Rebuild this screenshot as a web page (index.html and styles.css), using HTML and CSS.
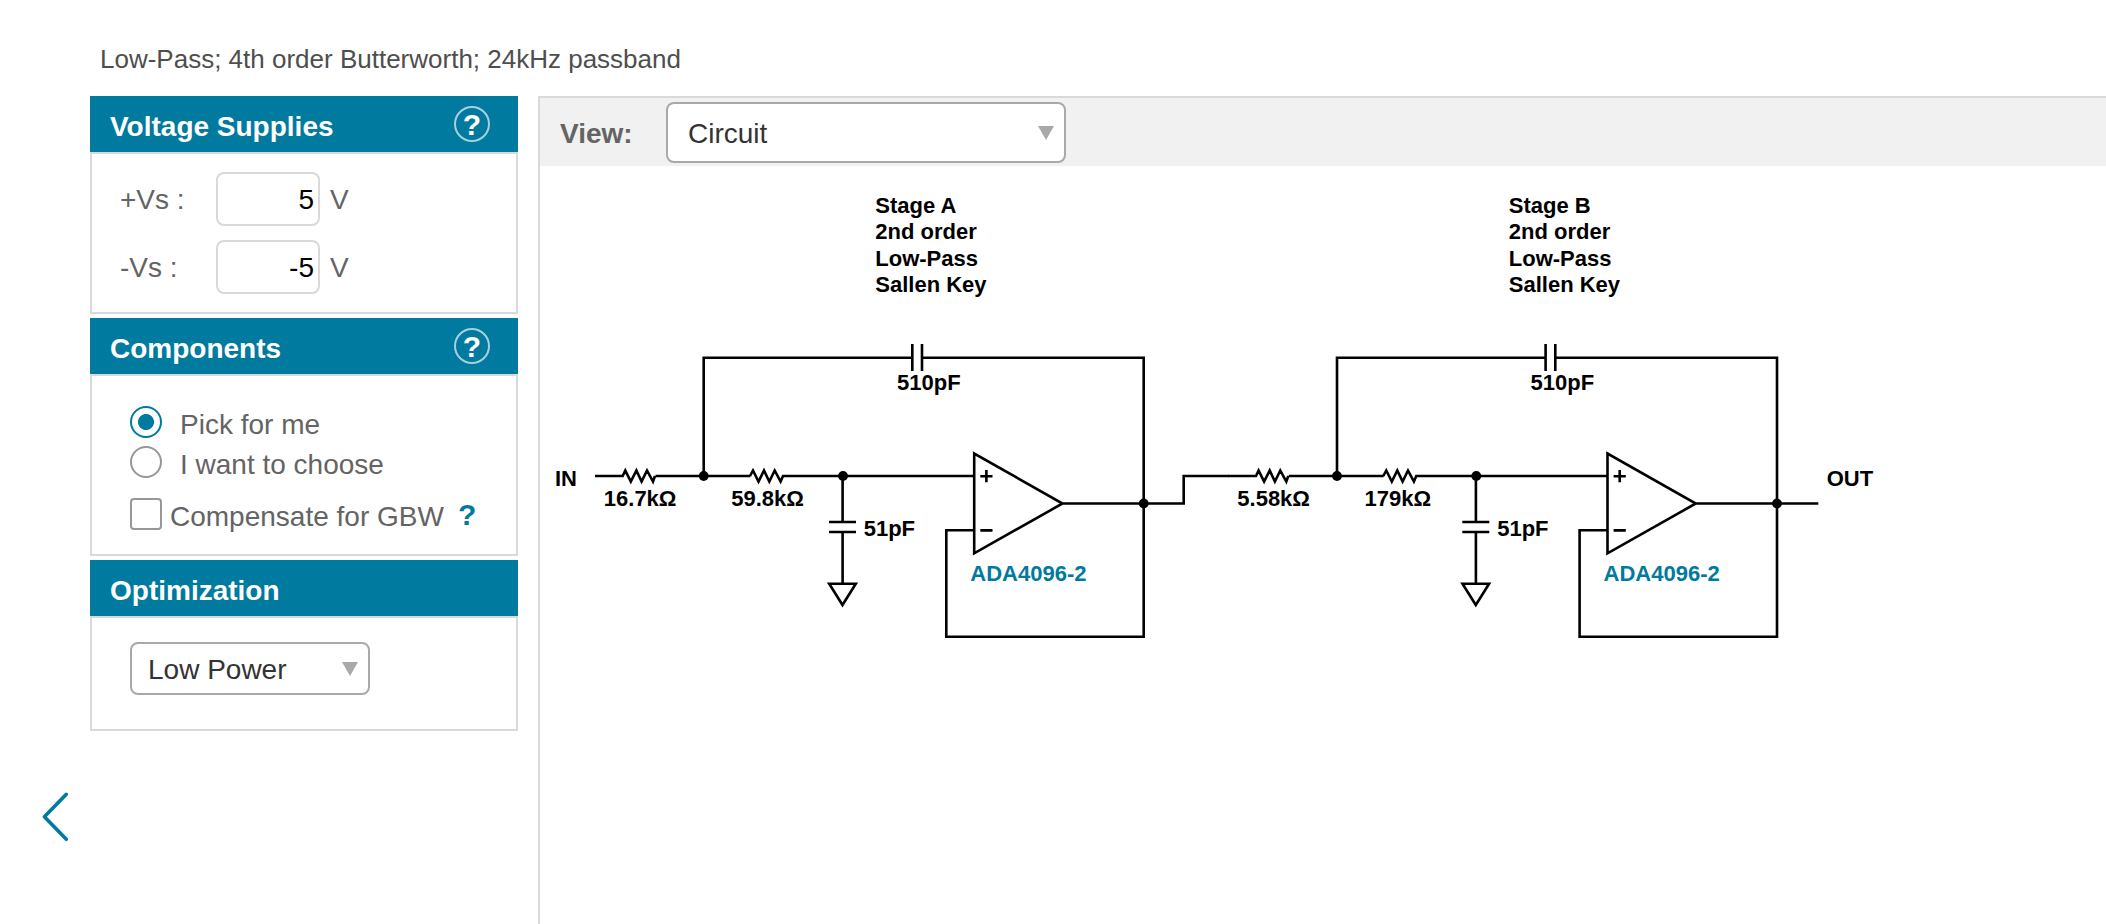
FILE: index.html
```html
<!DOCTYPE html>
<html lang="en">
<head>
<meta charset="utf-8">
<title>Filter Design</title>
<link rel="stylesheet" href="styles.css">
</head>
<body>
<header class="summary">Low-Pass; 4th order Butterworth; 24kHz passband</header>
<div class="layout">
  <nav class="gutter">
    <svg class="chevron" width="30" height="52" viewBox="0 0 30 52"><path d="M25.3 3.3 3.4 25.8 25.3 48.3"/></svg>
  </nav>
  <aside class="sidebar">
    <section class="panel">
      <h2 class="panel-head">Voltage Supplies <span class="help">?</span></h2>
      <div class="panel-body supplies">
        <div class="field"><label class="field-label">+Vs :</label><div class="field-input">5</div><span>V</span></div>
        <div class="field"><label class="field-label">-Vs :</label><div class="field-input">-5</div><span>V</span></div>
      </div>
    </section>
    <section class="panel">
      <h2 class="panel-head">Components <span class="help">?</span></h2>
      <div class="panel-body components">
        <div class="choice"><span class="radio checked"></span><span class="choice-text">Pick for me</span></div>
        <div class="choice"><span class="radio"></span><span class="choice-text">I want to choose</span></div>
        <div class="choice compensate"><span class="checkbox"></span><span class="choice-text">Compensate for GBW</span><span class="hint">?</span></div>
      </div>
    </section>
    <section class="panel">
      <h2 class="panel-head">Optimization</h2>
      <div class="panel-body optimization">
        <div class="select power"><span>Low Power</span><i class="arrow"></i></div>
      </div>
    </section>
  </aside>
  <main class="content">
    <div class="toolbar">
      <span class="view-label">View:</span>
      <div class="select view"><span>Circuit</span><i class="arrow"></i></div>
    </div>
    <svg class="circuit" width="1566" height="758" viewBox="540 166 1566 758">
      <defs>
        <g id="stage">
          <path d="M655.5 476H750.4M655 476 653 481.5 647 470.5 641.6 481.5 636.4 470.5 630.8 481.5 625.3 470.5 622.7 476H595"/>
          <path d="M750 476 753 470.5 758.5 481.5 764 470.5 769.3 481.5 774.7 470.5 780.6 481.5 783 476H974"/>
          <path d="M703.7 476V357.7H912.3M922 357.7H1143.7V636.7H946.3V530.3H974"/>
          <path d="M912.3 344V371M922 344V371"/>
          <path d="M842.6 476V522M829 522H856M829 532H856M842.6 532V583.7M829.2 583.7H855.8L842.5 605Z"/>
          <path d="M974.2 453.5V553.3L1062.5 503.5ZM1062 503.5H1144"/>
          <path d="M980.3 476.2H992.5M986.4 470V482.3M980.3 530.4H992.5"/>
          <g class="node"><circle cx="703.7" cy="476" r="4.9"/><circle cx="843" cy="476" r="4.9"/><circle cx="1143.7" cy="503.5" r="4.9"/></g>
        </g>
      </defs>
      <g class="wires">
        <use href="#stage"/>
        <use href="#stage" x="633.3"/>
        <path d="M1143 503.5H1183.7V476H1229M1777 503.5H1818.3"/>
      </g>
      <g class="labels">
        <text x="555" y="485.7">IN</text>
        <text x="603.8" y="505.7">16.7kΩ</text>
        <text x="731.2" y="505.7">59.8kΩ</text>
        <text x="897" y="390">510pF</text>
        <text x="863.7" y="535.7">51pF</text>
        <text x="875.3" y="213">Stage A</text>
        <text x="875.3" y="239">2nd order</text>
        <text x="875.3" y="266">Low-Pass</text>
        <text x="875.3" y="292">Sallen Key</text>
        <text class="part" x="970.3" y="580.7">ADA4096-2</text>
        <text x="1237.3" y="505.7">5.58kΩ</text>
        <text x="1364.5" y="505.7">179kΩ</text>
        <text x="1530.5" y="390">510pF</text>
        <text x="1497.2" y="535.7">51pF</text>
        <text x="1508.8" y="213">Stage B</text>
        <text x="1508.8" y="239">2nd order</text>
        <text x="1508.8" y="266">Low-Pass</text>
        <text x="1508.8" y="292">Sallen Key</text>
        <text class="part" x="1603.6" y="580.7">ADA4096-2</text>
        <text x="1826.7" y="485.7">OUT</text>
      </g>
    </svg>
  </main>
</div>
</body>
</html>
```
FILE: styles.css
```css
* { box-sizing: border-box; }
body {
  margin: 0;
  height: 924px;
  overflow: hidden;
  background: #fff;
  color: #646464;
  font: 28px/32px "Liberation Sans", Arial, sans-serif;
}
.summary {
  height: 96px;
  padding: 44px 0 0 100px;
  font-size: 26px;
  line-height: 30px;
  color: #4e4e4e;
}
.layout { display: flex; height: 828px; }
.gutter { width: 90px; padding: 695px 0 0 41px; }
.chevron { display: block; }
.chevron path {
  fill: none;
  stroke: #007a9e;
  stroke-width: 3.6;
  stroke-linecap: round;
  stroke-linejoin: round;
}
.sidebar {
  display: flex;
  flex-direction: column;
  gap: 4px;
  width: 428px;
  margin-right: 20px;
}
.panel-head {
  display: flex;
  justify-content: space-between;
  height: 56px;
  margin: 0;
  padding: 15px 28px 0 20px;
  background: #007a9e;
  color: #fff;
  font-size: 28px;
  font-weight: bold;
}
.help {
  width: 36px;
  height: 36px;
  margin-top: -5px;
  border: 2px solid rgba(255, 255, 255, 0.65);
  border-radius: 50%;
  font-size: 30px;
  line-height: 33px;
  text-align: center;
}
.panel-body { border: 2px solid #d9d9d9; }
.supplies {
  display: flex;
  flex-direction: column;
  gap: 14px;
  height: 162px;
  padding: 18px 0 0 28px;
}
.field { display: flex; height: 54px; line-height: 55px; }
.field-label { width: 96px; }
.field-input {
  width: 104px;
  margin-right: 10px;
  padding-right: 4px;
  border: 2px solid #d9d9d9;
  border-radius: 8px;
  color: #000;
  line-height: 51px;
  text-align: right;
}
.components {
  display: flex;
  flex-direction: column;
  gap: 8px;
  height: 182px;
  padding: 30px 0 0 38px;
}
.choice { display: flex; height: 32px; line-height: 38px; }
.choice-text { white-space: nowrap; }
.radio, .checkbox {
  width: 32px;
  height: 32px;
  border: 2px solid #979797;
  border-radius: 50%;
}
.radio { margin-right: 18px; }
.checked {
  border-color: #007a9e;
  background: radial-gradient(circle, #007a9e 7.6px, #fff 8.4px);
}
.compensate { margin-top: 12px; }
.checkbox { margin-right: 8px; border-radius: 4px; }
.hint {
  margin-left: 14px;
  color: #007a9e;
  font-size: 30px;
  font-weight: bold;
  line-height: 33px;
}
.optimization { height: 115px; padding: 24px 0 0 38px; }
.select {
  display: flex;
  justify-content: space-between;
  border: 2px solid #a9a9a9;
  border-radius: 8px;
  background: #fff;
  color: #333;
}
.power { width: 240px; height: 53px; padding: 0 10px 0 16px; line-height: 51px; }
.view { width: 400px; height: 61px; padding: 0 10px 0 20px; line-height: 59px; }
.arrow {
  height: 0;
  border: 8px solid transparent;
  border-top: 14px solid #a9a9a9;
  border-bottom: 0;
}
.power .arrow { margin-top: 18px; }
.view .arrow { margin-top: 22px; }
.content {
  width: 1568px;
  border-top: 2px solid #d9d9d9;
  border-left: 2px solid #d9d9d9;
}
.toolbar {
  display: flex;
  height: 68px;
  padding: 4px 0 0 20px;
  background: #f1f1f1;
}
.view-label { width: 106px; line-height: 64px; font-weight: bold; }
.circuit { display: block; }
.wires { fill: none; stroke: #000; stroke-width: 2.6; }
.node { fill: #000; stroke: none; }
.labels { fill: #000; font-size: 22px; font-weight: bold; }
.part { fill: #007a9e; }
```
